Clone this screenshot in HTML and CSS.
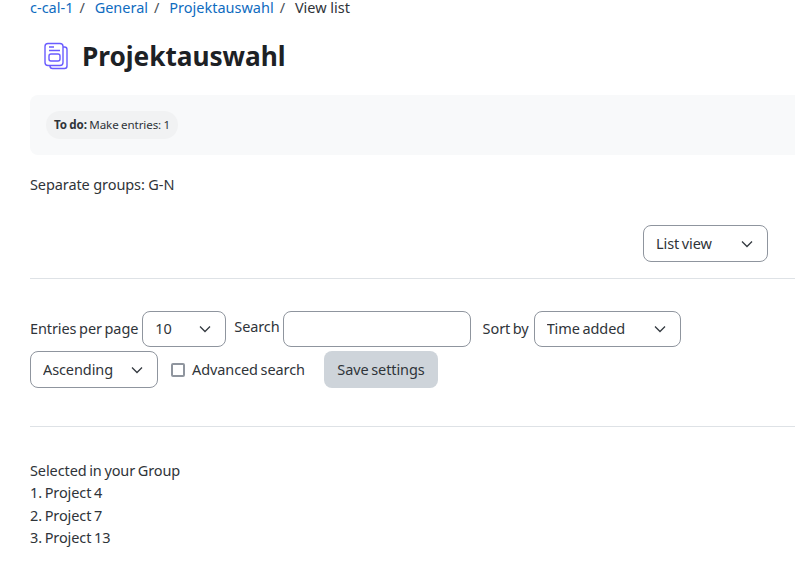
FILE: index.html
```html
<!DOCTYPE html>
<html lang="en">
<head>
  <meta charset="UTF-8">
  <title>Projektauswahl</title>
  <link rel="stylesheet" href="styles.css">
</head>
<body>

  <nav class="breadcrumb">
    <a href="#">c-cal-1</a><span class="sep">/</span>
    <a href="#">General</a><span class="sep">/</span>
    <a href="#">Projektauswahl</a><span class="sep">/</span>
    <span>View list</span>
  </nav>

  <header class="page-head">
    <svg class="activity-icon" width="24" height="28" viewBox="0 0 24 28" fill="none" stroke="#6a5cff" stroke-width="1.4">
      <path d="M19 5 h1.5 a2.5 2.5 0 0 1 2.5 2.5 v16.5 a2.5 2.5 0 0 1-2.5 2.5 h-12 a2.5 2.5 0 0 1-2.5-2.5"/>
      <rect x="1" y="1.5" width="18" height="22" rx="3"/>
      <rect x="5" y="12" width="11" height="7" rx="2"/>
      <path d="M5 5 h5 M5 8.5 h11"/>
    </svg>
    <h1>Projektauswahl</h1>
  </header>

  <div class="completion">
    <span class="pill"><strong>To do:</strong> Make entries: 1</span>
  </div>

  <p class="groups">Separate groups: G-N</p>

  <div class="view-row">
    <select class="view-select"><option>List view</option></select>
  </div>

  <hr>

  <form class="options">
    <label for="perpage">Entries per page</label>
    <select id="perpage" class="w-perpage"><option>10</option></select>
    <label for="search" class="search-label">Search</label>
    <input id="search" type="text" class="search-input">
    <label for="sort" class="sort-label">Sort by</label>
    <select id="sort" class="w-sort"><option>Time added</option></select>
    <select class="w-order"><option>Ascending</option></select>
    <label class="check"><input type="checkbox"> Advanced search</label>
    <button type="button">Save settings</button>
  </form>

  <hr class="hr-lower">

  <div class="entries">
    Selected in your Group<br>
    1. Project 4<br>
    2. Project 7<br>
    3. Project 13
  </div>

</body>
</html>
```

FILE: styles.css
```css
body {
  margin: -4px 0 0;
  padding-left: 30px;
  background: #fff;
  color: #2f3439;
  font-family: "Noto Sans", sans-serif;
  font-size: 14.5px;
  line-height: 22.5px;
  letter-spacing: -0.1px;
  word-spacing: -1px;
  overflow: hidden;
}
a {
  color: #0f6cbf;
  text-decoration: none;
}
.breadcrumb {
  letter-spacing: 0;
  word-spacing: 0;
}
.sep {
  margin: 0 6px;
  color: #495057;
}
.page-head {
  display: flex;
  align-items: center;
  height: 38px;
  margin-top: 18px;
  padding-left: 14px;
}
.activity-icon {
  margin-right: 14px;
}
h1 {
  margin: 0;
  color: #1d2125;
  font-size: 26.25px;
  line-height: 38px;
  font-weight: 700;
  letter-spacing: -0.05px;
  word-spacing: 0;
}
.completion {
  margin-top: 20px;
  padding: 16px;
  height: 60px;
  box-sizing: border-box;
  background: #f8f9fa;
  border-radius: 8px 0 0 8px;
}
.pill {
  display: inline-block;
  height: 28px;
  padding: 0 8px;
  border-radius: 14px;
  background: #f1f2f3;
  font-size: 11.6px;
  line-height: 28px;
  word-spacing: -0.5px;
}
.groups {
  margin: 18px 0 0;
  word-spacing: 0;
}
.view-row {
  display: flex;
  justify-content: flex-end;
  margin-top: 30px;
  padding-right: 27px;
}
select, .search-input {
  height: 37px;
  box-sizing: border-box;
  border: 1px solid #8f959e;
  border-radius: 8px;
  background: #fff;
  color: inherit;
  font: inherit;
  letter-spacing: inherit;
  word-spacing: inherit;
}
select {
  appearance: none;
  padding: 0 12px;
  background-image: url("data:image/svg+xml,%3Csvg xmlns='http://www.w3.org/2000/svg' viewBox='0 0 12 8' fill='none' stroke='%23343a40' stroke-width='1.3'%3E%3Cpath d='M1 1.5l5 5 5-5'/%3E%3C/svg%3E");
  background-repeat: no-repeat;
  background-position: right 14px center;
  background-size: 12px 8px;
}
.view-select {
  width: 125px;
}
hr {
  height: 1px;
  margin: 16px 0 0;
  border: 0;
  background: #dee2e6;
}
.options {
  display: flex;
  flex-wrap: wrap;
  align-items: center;
  row-gap: 4px;
  margin-top: 32px;
}
.options > label {
  margin-right: 4px;
  margin-bottom: 2px;
}
.w-perpage {
  width: 84px;
  height: 36px;
  margin-right: 8px;
  padding-bottom: 1px;
}
.options > .search-label {
  position: relative;
  top: -2px;
  margin-right: 3px;
}
.search-input {
  width: 188px;
  height: 36px;
  margin-right: 12px;
}
.options > .sort-label {
  margin-right: 5px;
}
.w-sort {
  width: 147px;
  height: 36px;
  padding-bottom: 1px;
}
.w-order {
  width: 128px;
  margin-right: 13px;
}
.options > .check {
  display: flex;
  align-items: center;
  margin-right: 19px;
  margin-bottom: 0;
}
.check input {
  appearance: none;
  width: 14px;
  height: 14px;
  margin: 0 7px 0 0;
  border: 2px solid #8f959e;
  border-radius: 2px;
  background: #fff;
}
button {
  height: 37px;
  padding: 0 13.5px;
  border: 0;
  border-radius: 8px;
  background: #ced4da;
  color: inherit;
  font: inherit;
  letter-spacing: inherit;
  word-spacing: inherit;
}
.hr-lower {
  margin-top: 38px;
}
.entries {
  margin-top: 31.6px;
}
```
